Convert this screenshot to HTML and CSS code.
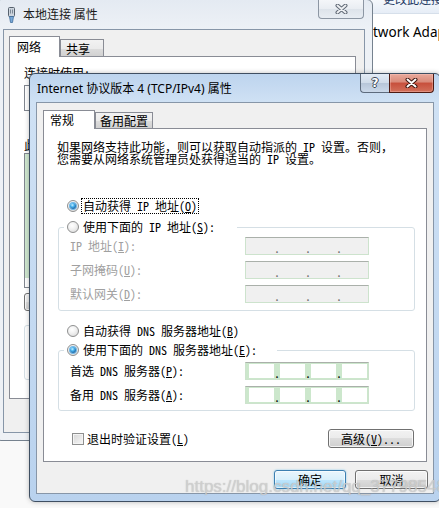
FILE: index.html
```html
<!DOCTYPE html>
<html lang="zh-CN">
<head>
<meta charset="utf-8">
<title>Internet 协议版本 4 (TCP/IPv4) 属性</title>
<link rel="stylesheet" href="styles.css">
</head>
<body>
<div class="desktop">

  <section class="win side">
    <div class="side-bar"><span>更改此连接</span></div>
    <div class="side-body">twork Adapter</div>
  </section>

  <section class="win back">
    <header class="titlebar">
      <svg class="app-icon" width="9" height="16" viewBox="0 0 9 16">
        <rect x="1.5" y="0.5" width="6" height="9" rx="1" fill="#cdd5de" stroke="#56616d"/>
        <path d="M3.5 2.5v4M5.5 2.5v4" stroke="#7c8996"/>
        <path d="M2.5 9.5 L3.5 15.5 H5.5 L6.5 9.5Z" fill="#79a9d9" stroke="#3f6c9a" stroke-width=".8"/>
      </svg>
      <span class="title">本地连接 属性</span>
      <span class="cap-close">
        <svg width="13" height="10" viewBox="0 0 13 10"><path d="M2.5 1.5 L10.5 8.5 M10.5 1.5 L2.5 8.5" stroke="#5f6874" stroke-width="4" stroke-linecap="round"/><path d="M2.5 1.5 L10.5 8.5 M10.5 1.5 L2.5 8.5" stroke="#eef0f3" stroke-width="2" stroke-linecap="round"/></svg>
      </span>
    </header>
    <div class="client">
      <div class="tabs">
        <span class="tab sel">网络</span>
        <span class="tab">共享</span>
      </div>
      <div class="panel">
        <div class="b-label">连接时使用:</div>
        <div class="b-adapter"></div>
        <div class="b-label b-label2">此连接使用下列项目(O):</div>
        <div class="b-list"></div>
        <div class="b-btns"><span class="btn b-btn">安装(N)...</span></div>
        <div class="b-desc"></div>
      </div>
    </div>
  </section>

  <section class="win front">
    <header class="titlebar">
      <span class="title">Internet 协议版本 4 (TCP/IPv4) 属性</span>
      <div class="caps">
        <span class="cap-help">?</span>
        <span class="cap-close">
          <svg width="13" height="10" viewBox="0 0 13 10"><path d="M2.5 1.5 L10.5 8.5 M10.5 1.5 L2.5 8.5" stroke="#3b140d" stroke-width="4" stroke-linecap="round"/><path d="M2.5 1.5 L10.5 8.5 M10.5 1.5 L2.5 8.5" stroke="#fff" stroke-width="2" stroke-linecap="round"/></svg>
        </span>
      </div>
    </header>
    <div class="client">
      <div class="tabs">
        <span class="tab sel">常规</span>
        <span class="tab">备用配置</span>
      </div>
      <div class="panel">
        <p class="desc">如果网络支持此功能，则可以获取自动指派的 IP 设置。否则，<br>您需要从网络系统管理员处获得适当的 IP 设置。</p>

        <div class="opt opt-first"><span class="radio on"></span><span class="focus">自动获得 IP 地址(<u>O</u>)</span></div>

        <fieldset class="group g-ip">
          <legend class="lg-ip"><span class="opt"><span class="radio"></span><span>使用下面的 IP 地址(<u>S</u>):</span></span></legend>
          <div class="rows">
            <span class="flabel dis">IP 地址(<u>I</u>):</span>
            <span class="ipf dis"><span class="seg"></span><span class="dot">.</span><span class="seg"></span><span class="dot">.</span><span class="seg"></span><span class="dot">.</span><span class="seg"></span></span>
            <span class="flabel dis">子网掩码(<u>U</u>):</span>
            <span class="ipf dis"><span class="seg"></span><span class="dot">.</span><span class="seg"></span><span class="dot">.</span><span class="seg"></span><span class="dot">.</span><span class="seg"></span></span>
            <span class="flabel dis">默认网关(<u>D</u>):</span>
            <span class="ipf dis"><span class="seg"></span><span class="dot">.</span><span class="seg"></span><span class="dot">.</span><span class="seg"></span><span class="dot">.</span><span class="seg"></span></span>
          </div>
        </fieldset>

        <div class="opt opt-dns"><span class="radio"></span><span>自动获得 DNS 服务器地址(<u>B</u>)</span></div>

        <fieldset class="group g-dns">
          <legend class="lg-dns"><span class="opt"><span class="radio on"></span><span>使用下面的 DNS 服务器地址(<u>E</u>):</span></span></legend>
          <div class="rows">
            <span class="flabel">首选 DNS 服务器(<u>P</u>):</span>
            <span class="ipf on"><span class="seg"></span><span class="dot">.</span><span class="seg"></span><span class="dot">.</span><span class="seg"></span><span class="dot">.</span><span class="seg"></span></span>
            <span class="flabel">备用 DNS 服务器(<u>A</u>):</span>
            <span class="ipf on"><span class="seg"></span><span class="dot">.</span><span class="seg"></span><span class="dot">.</span><span class="seg"></span><span class="dot">.</span><span class="seg"></span></span>
          </div>
        </fieldset>

        <div class="panel-foot">
          <span class="chk"><span class="checkbox"></span><span>退出时验证设置(<u>L</u>)</span></span>
          <span class="btn adv"><span>高级(<u>V</u>)...</span></span>
        </div>
      </div>
      <div class="actions">
        <span class="btn default">确定</span>
        <span class="btn">取消</span>
      </div>
    </div>
  </section>

  <div class="watermark">https://blog.csdn.net/qq_37798548</div>
</div>
</body>
</html>
```

FILE: styles.css
```css
* { box-sizing: border-box; }
html, body { margin: 0; padding: 0; }
body {
  width: 439px; height: 508px; overflow: hidden; background: #fff;
  font-family: "Noto Sans Mono CJK SC", "Noto Sans CJK SC", "Noto Sans", sans-serif;
  font-size: 12px; line-height: 14px; color: #000;
}
u { text-decoration: underline; text-underline-offset: 1px; }

.desktop { position: relative; width: 439px; height: 508px; overflow: hidden; background: #f9f9f9; }
.win { position: absolute; }

/* window at the right, behind */
.side { z-index: 1; left: 366px; top: 0; width: 120px; height: 140px; background: #fff; }
.side-bar {
  height: 14px; padding-left: 17px; overflow: hidden;
  background: linear-gradient(#f5f8fc, #e6edf6); border-bottom: 1px solid #d6dfea;
}
.side-bar span {
  display: block; margin-top: -8px; font-family: "Noto Sans CJK SC", sans-serif;
  font-size: 12px; line-height: 14px; color: #1e3a64; white-space: nowrap;
}
.side-body {
  padding: 9px 0 0 7px; font-family: "Noto Sans", sans-serif; font-size: 13.5px;
  line-height: 18px; white-space: nowrap;
}

/* shared window parts */
.titlebar { display: flex; align-items: flex-start; flex: none; }
.client { flex: 1; background: #f0f0f0; border: 1px solid #8796a8; }
.tabs { display: flex; align-items: flex-end; flex: none; }
.tab {
  border: 1px solid #898c95; border-bottom: none; white-space: nowrap;
  background: linear-gradient(#f2f2f2 0%, #ebebeb 50%, #dddddd 50%, #cfcfcf 100%);
}
.tab.sel { background: #fff; position: relative; z-index: 2; }
.panel { position: relative; z-index: 1; margin-top: -1px; border: 1px solid #898c95; background: #fff; }
.btn {
  display: flex; align-items: center; justify-content: center; height: 19px;
  border: 1px solid #707070; border-radius: 3px; white-space: nowrap;
  background: linear-gradient(#f2f2f2 0%, #ebebeb 50%, #dddddd 50%, #cfcfcf 100%);
  box-shadow: inset 0 0 0 1px rgba(255,255,255,.75);
}
.btn.default {
  border-color: #3c7fb1;
  background: linear-gradient(#eaf6fd 0%, #d9f0fc 50%, #bee6fd 50%, #a7d9f5 100%);
  box-shadow: inset 0 0 0 1px rgba(255,255,255,.6), 0 0 2px #7ec4ea;
}
.cap-close { display: flex; align-items: center; justify-content: center; flex: none; }

/* background dialog */
.back {
  z-index: 2; left: -5px; top: -1px; width: 378px; height: 442px;
  display: flex; flex-direction: column; padding: 0 7px 7px;
  border: 1px solid #76828f; border-radius: 6px;
  background: linear-gradient(#e4eaf2 0, #edf1f6 29px, #eef1f5 100%);
}
.back .titlebar { height: 29px; }
.app-icon { margin: 7px 0 0 4px; flex: none; }
.back .title {
  margin: 6px 0 0 7px; font-family: "Noto Sans CJK SC", sans-serif; line-height: 16px; color: #1b1b1b;
}
.back .cap-close {
  margin-left: auto; margin-right: 1px; width: 46px; height: 19px;
  border: 1px solid #8c96a3; border-top: none; border-radius: 0 0 4px 4px;
  background: linear-gradient(#f4f6f9, #e9edf2 50%, #dde3ea 50%, #e8edf3);
}
.back .client { padding: 6px 0 0 5px; }
.back .tabs { height: 21px; }
.back .tab { height: 18px; line-height: 17px; width: 44px; padding-left: 5px; }
.back .tab.sel { height: 21px; line-height: 19px; width: 51px; padding-left: 7px; }
.back .panel { width: 347px; height: 343px; padding: 9px 0 0 14px; }
.b-label { line-height: 14px; white-space: nowrap; }
.b-adapter { margin-top: 5px; width: 322px; height: 26px; border: 1px solid #828790; background: #fff; }
.b-label2 { margin-top: 27px; }
.b-list {
  margin-top: 1px; width: 322px; height: 135px; border: 1px solid #828790;
  background: linear-gradient(#d0e8d0 0, #d0e8d0 124px, #fff 124px);
}
.b-btns { margin-top: 5px; display: flex; }
.b-btn { width: 80px; height: 18px; }
.b-desc { margin-top: 14px; width: 322px; height: 55px; border: 1px solid #d5dfe5; border-radius: 3px; }

/* foreground dialog */
.front {
  z-index: 3; left: 29px; top: 73px; width: 412px; height: 429px;
  display: flex; flex-direction: column; padding: 0 6px 7px;
  border: 1px solid #3f4f62; border-radius: 6px;
  background: linear-gradient(#bdd4ee 0, #cfe1f4 28px, #c3d9f1 60%, #b9d2ee 100%);
  box-shadow: 0 0 5px rgba(0,0,0,.25);
}
.front .titlebar { height: 28px; }
.front .title {
  margin: 7px 0 0 1px; font-family: "Noto Sans", "Noto Sans CJK SC", sans-serif;
  line-height: 16px; white-space: nowrap; color: #000;
}
.caps { margin-left: auto; display: flex; height: 19px; }
.cap-help {
  width: 29px; height: 19px; border: 1px solid #5d6b7d; border-top: none; border-right: none;
  border-radius: 0 0 0 4px;
  background: linear-gradient(#e3ebf5, #cfdbe9 50%, #b6c5d8 50%, #cbd9ea);
  display: flex; align-items: center; justify-content: center;
  font-family: "DejaVu Sans", sans-serif; font-weight: bold; font-size: 12px; line-height: 12px; color: #fff;
  text-shadow: -1px 0 #3b4656, 1px 0 #3b4656, 0 -1px #3b4656, 0 1px #3b4656;
}
.front .cap-close {
  width: 45px; height: 19px; border: 1px solid #4d1a12; border-top: none;
  border-radius: 0 0 4px 0;
  background: linear-gradient(#e9a99b 0, #d98a79 45%, #c74f3b 50%, #d2705b 100%);
  box-shadow: inset 0 0 0 1px rgba(255,210,200,.35);
}
.front .client { padding: 7px 5px 0 6px; display: flex; flex-direction: column; }
.front .tabs { height: 19px; }
.front .tab { height: 17px; line-height: 16px; padding: 0 4px; margin-left: 0; }
.front .tab.sel { height: 19px; line-height: 18px; width: 52px; padding: 0 0 0 6px; }
.front .panel { width: 384px; height: 334px; padding: 12px 11px 0 13px; }

.desc { margin: 0; line-height: 12px; white-space: nowrap; }

.opt { display: flex; align-items: center; gap: 4px; height: 14px; white-space: nowrap; }
.opt-first { margin: 34px 0 0 10px; }
.focus { outline: 1px dotted #000; padding: 0 1px; margin-left: -1px; }
.radio {
  flex: none; position: relative; width: 12px; height: 12px; border-radius: 50%;
  border: 1px solid #8e8f8f;
  background: radial-gradient(circle at 40% 35%, #ffffff 0, #f2f2f2 40%, #d4d4d4 100%);
}
.radio.on::after {
  content: ""; position: absolute; left: 2px; top: 2px; width: 6px; height: 6px; border-radius: 50%;
  background: radial-gradient(circle at 40% 35%, #c8f0ff 0, #45b0ec 35%, #0d4f8e 85%);
  box-shadow: 0 0 0 1px #6fb6e6;
}

.group {
  margin: 7px 0 0 1px; padding: 3px 0 7px 11px; min-width: 0;
  border: 1px solid #d5dfe5; border-radius: 3px;
}
.group legend { margin-left: -6px; padding: 0 22px 0 3px; line-height: 14px; }
.g-dns legend { padding-right: 20px; }
.g-dns { margin-top: 5px; padding-top: 5px; padding-bottom: 6px; }
.opt-dns { margin: 13px 0 0 10px; }

.rows { display: grid; grid-template-columns: 175px 124px; grid-auto-rows: 18px; row-gap: 6px; align-items: center; }
.flabel { white-space: nowrap; line-height: 14px; }
.flabel.dis { color: #a0a0a0; }
.ipf {
  display: flex; height: 18px; padding: 1px 1px 1px 3px;
  border: 1px solid; border-color: #aab0aa #cde3cd #cde3cd #cde3cd;
}
.ipf.dis { background: #f0f0f0; }
.ipf.on { background: #cce7cc; }
.seg { width: 25px; }
.ipf.on .seg { background: #fff; }
.dot { width: 6px; text-align: center; line-height: 18px; font-size: 12px; color: #000; }
.ipf.dis .dot { color: #6d6d6d; }

.panel-foot {
  display: flex; align-items: center; justify-content: space-between;
  margin-top: 18px; padding: 0 1px 0 15px; height: 19px;
}
.chk { display: flex; align-items: center; gap: 3px; white-space: nowrap; }
.checkbox {
  width: 12px; height: 12px; border: 1px solid #8e8f8f;
  background: linear-gradient(135deg, #d6d6d6, #f7f7f7);
  box-shadow: inset 0 0 0 1px #f4f4f4;
}
.adv { width: 86px; }

.actions { display: flex; justify-content: flex-end; gap: 9px; margin-top: 8px; }
.actions .btn { width: 72px; height: 19px; }
.actions .btn + .btn { width: 73px; }

.watermark {
  position: absolute; z-index: 4; left: 185px; top: 477px; white-space: nowrap;
  font-family: "Liberation Sans", Arial, sans-serif; font-size: 17px; line-height: 20px;
  color: rgba(212, 212, 212, .8); text-shadow: 0 0 1px rgba(110,110,110,.45);
}
```
